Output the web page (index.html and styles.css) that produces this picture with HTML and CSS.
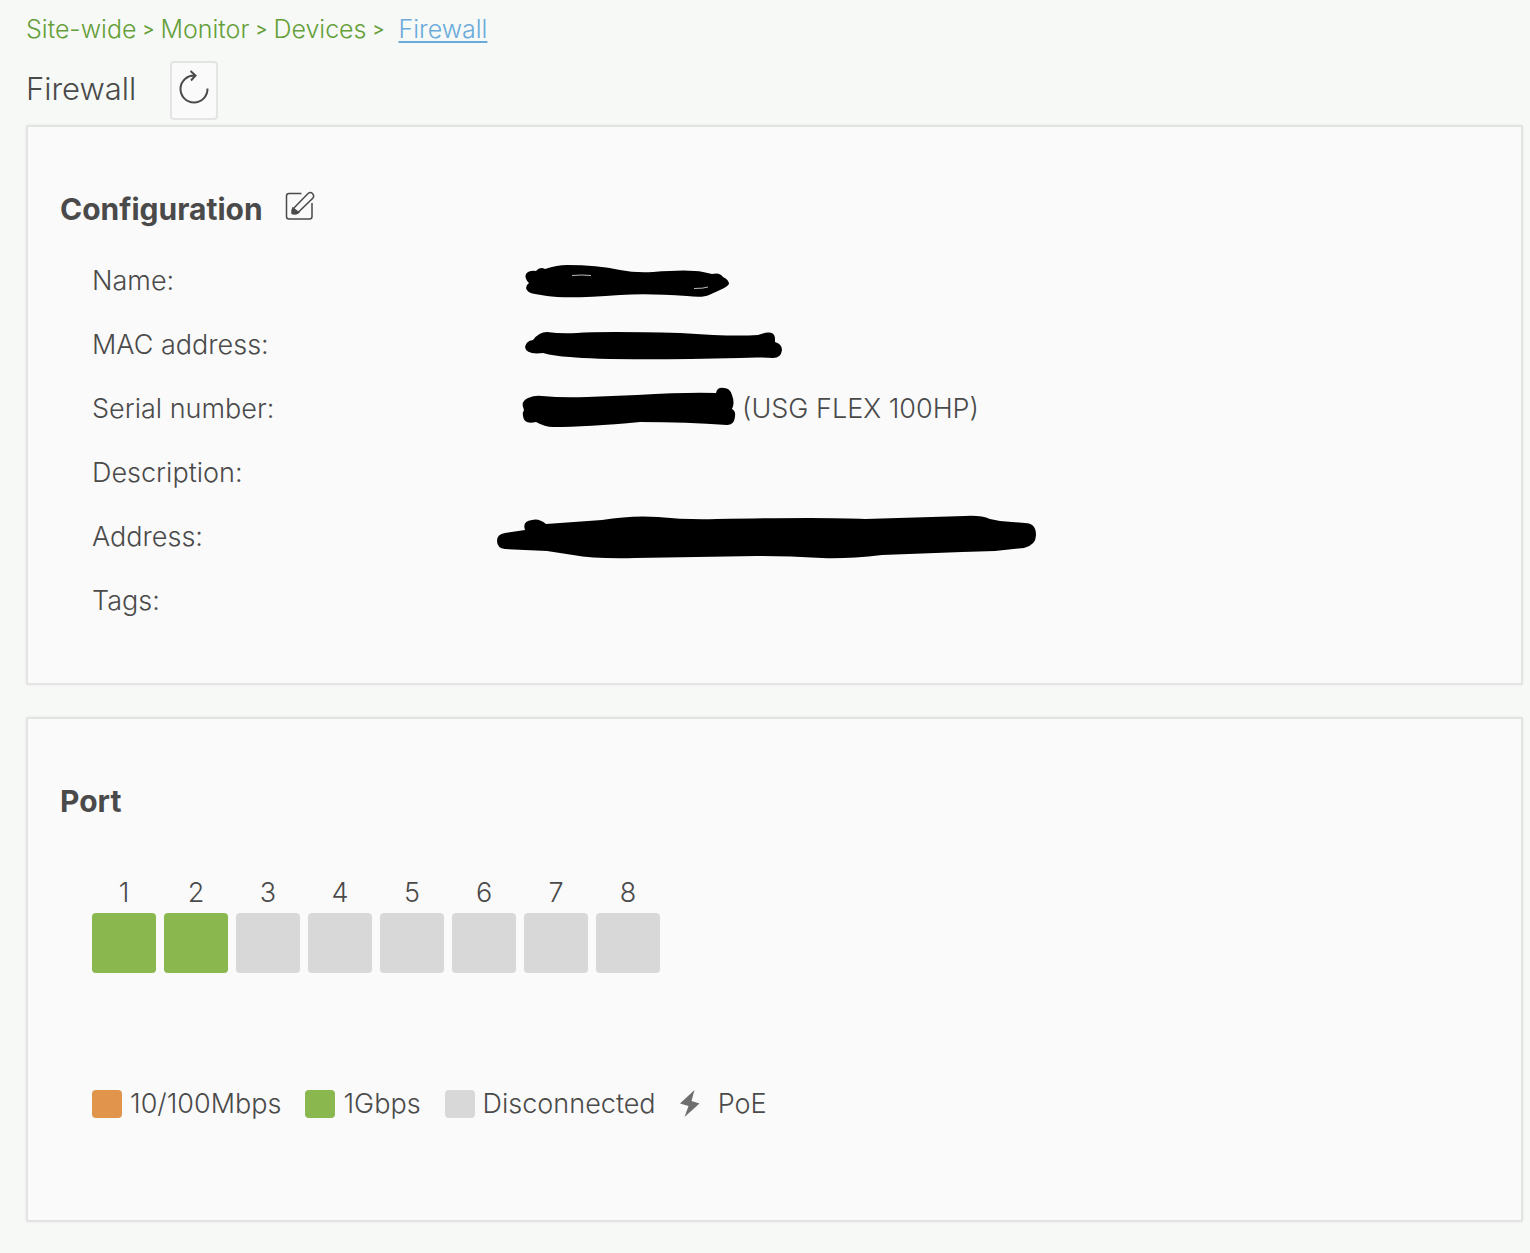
FILE: index.html
```html
<!DOCTYPE html>
<html lang="en">
<head>
<meta charset="utf-8">
<meta name="viewport" content="width=device-width, initial-scale=1">
<title>Firewall</title>
<link rel="stylesheet" href="styles.css">
</head>
<body>
<nav class="breadcrumb" aria-label="Breadcrumb">
  <a href="#">Site-wide</a>
  <span class="separator">&gt;</span>
  <a href="#">Monitor</a>
  <span class="separator">&gt;</span>
  <a href="#">Devices</a>
  <span class="separator">&gt;</span>
  <a class="current" href="#" aria-current="page">Firewall</a>
</nav>
<header class="page-header">
  <h1>Firewall</h1>
  <button class="refresh" type="button" aria-label="Refresh">
    <svg width="32" height="34" viewBox="0 0 32 34" fill="none" stroke="currentColor" stroke-width="2" aria-hidden="true">
      <path d="M29.500 18.500A13.500 13.500 0 1 1 17 5.500M12.500 1L17.500 5.500L13 10.500"/>
    </svg>
  </button>
</header>
<main class="cards">
  <section class="card">
    <div class="card-title">
      <h2>Configuration</h2>
      <button class="edit" type="button" aria-label="Edit configuration">
        <svg width="30" height="30" viewBox="0 0 30 30" fill="none" stroke="currentColor" stroke-width="1.500" aria-hidden="true">
          <path d="M16.500 2.500H4Q1.500 2.500 1.500 5V25.500Q1.500 28 4 28H24.500Q27 28 27 25.500V12"/>
          <path d="M8 18L23 2.500Q25.500 .5 27.500 2.500T28 7L13 21.500L7.500 22.500Z"/>
          <path d="M8 17L13.500 21.500Q9.500 24 7 22Q6.500 19.500 8 17Z" fill="currentColor"/>
        </svg>
      </button>
    </div>
    <dl class="details">
      <div class="detail">
        <dt>Name:</dt>
        <dd><svg width="239" height="64" viewBox="0 0 239 64" aria-hidden="true">
          <path d="M32 34Q27 29 29 25Q32 21 39 22Q43 17 48 20Q60 16 70 16Q100 16 123 21Q138 24 156 23Q192 20 206 23L215 25Q223 23 226 28Q232 31 232 35Q230 38 223 41L212 46Q206 49 190 47Q150 44 123 46Q70 50 50 47L38 45Q30 44 29 39Q29 36 32 34Z"/>
          <path d="M75 26.500Q84 25.500 94 26.500M197 39.500Q207 39.500 211 38" fill="none" stroke="#bdbdbd"/>
        </svg></dd>
      </div>
      <div class="detail">
        <dt>MAC address:</dt>
        <dd><svg width="289" height="64" viewBox="0 0 289 64" aria-hidden="true">
          <path d="M28 34Q29 28 36 27Q42 19 50 19Q64 21 80 20Q105 18 183 20L216 22Q244 23 261 22Q277 16 278 25V29Q285 31 285 37Q284 45 276 45Q260 44 243 45L193 46Q100 47 73 44Q57 43 46 40Q29 42 28 34Z"/>
        </svg></dd>
      </div>
      <div class="detail">
        <dt>Serial number:</dt>
        <dd><svg width="239" height="64" viewBox="0 0 239 64" aria-hidden="true">
          <path d="M27 33Q23 24 31 21Q38 18 45 19Q65 21 90 20L140 18Q190 15 219 16Q220 10 227 11Q233 11 235 18Q238 26 235 32Q239 34 238 40Q237 48 230 48Q190 45 143 45Q90 50 56 50Q48 50 39 45Q27 48 26 39Q25 36 27 33Z"/>
        </svg><span>(USG FLEX 100HP)</span></dd>
      </div>
      <div class="detail">
        <dt>Description:</dt>
        <dd></dd>
      </div>
      <div class="detail">
        <dt>Address:</dt>
        <dd><svg width="540" height="64" viewBox="0 0 540 64" aria-hidden="true">
          <path d="M0 36Q0 29 8 28L28 25Q25 16 35 15Q42 13 49 19L105 15Q135 10 161 12Q190 15 220 14Q330 12 368 14L468 11Q484 10 493 14L503 16L528 18Q539 18 539 30Q539 40 527 43L498 46L465 47L385 50Q350 54 325 53Q290 51 260 51L138 53Q98 54 76 50L50 46L8 44Q0 43 0 36Z"/>
        </svg></dd>
      </div>
      <div class="detail">
        <dt>Tags:</dt>
        <dd></dd>
      </div>
    </dl>
  </section>
  <section class="card">
    <div class="card-title">
      <h2>Port</h2>
    </div>
    <ol class="ports">
      <li class="port"><span>1</span><i class="jack gigabit"></i></li>
      <li class="port"><span>2</span><i class="jack gigabit"></i></li>
      <li class="port"><span>3</span><i class="jack"></i></li>
      <li class="port"><span>4</span><i class="jack"></i></li>
      <li class="port"><span>5</span><i class="jack"></i></li>
      <li class="port"><span>6</span><i class="jack"></i></li>
      <li class="port"><span>7</span><i class="jack"></i></li>
      <li class="port"><span>8</span><i class="jack"></i></li>
    </ol>
    <ul class="legend">
      <li><i class="swatch fast"></i>10/100Mbps</li>
      <li><i class="swatch gigabit"></i>1Gbps</li>
      <li><i class="swatch"></i>Disconnected</li>
      <li>
        <svg width="30" height="28" viewBox="0 0 30 28" fill="#6e6e6e" aria-hidden="true"><path d="M14.500 0L0 13.500L8.500 16L4.500 27L19.500 13.500L11.500 11Z"/></svg>
        PoE
      </li>
    </ul>
  </section>
</main>
</body>
</html>
```
FILE: styles.css
```css
* {
  box-sizing: border-box;
}

body {
  margin: 0;
  padding: 13px 7px 31px 26px;
  background: #f7f9f6;
  color: #4a4a4a;
  font-family: Inter, "Liberation Sans", sans-serif;
  font-size: 27px;
  font-weight: 300;
  line-height: 32px;
}

h1,
h2,
dl,
dd,
ol,
ul {
  margin: 0;
  padding: 0;
}

ol,
ul {
  list-style: none;
}

button {
  display: grid;
  place-items: center;
  padding: 0;
  color: inherit;
  cursor: pointer;
}

svg {
  display: block;
  flex: none;
}

.breadcrumb {
  display: flex;
  flex-wrap: wrap;
  gap: 6px;
  color: #659f3a;
  font-size: 25px;
}

.breadcrumb a {
  color: inherit;
  text-decoration: none;
}

.breadcrumb .separator {
  font-size: 18px;
  font-weight: 500;
}

.breadcrumb .current {
  margin-left: 8px;
  color: #6aabdc;
  text-decoration: underline;
  text-decoration-thickness: 2px;
  text-underline-offset: 3px;
}

.page-header {
  display: flex;
  align-items: center;
  gap: 34px;
  padding: 16px 0 5px;
}

.page-header h1 {
  padding-bottom: 4px;
  font-size: 31px;
  font-weight: 300;
}

.refresh {
  width: 48px;
  height: 59px;
  padding-bottom: 8px;
  border: 2px solid #e3e4e3;
  border-radius: 4px;
  background: #fafafa;
}

.cards {
  display: grid;
  gap: 32px;
}

.card {
  padding: 64px 32px;
  border: 2px solid #e2e3e2;
  border-radius: 2px;
  background: #fafafa;
  box-shadow: 0 0 3px #e8eae8;
}

.card-title {
  display: flex;
  align-items: center;
  gap: 22px;
  height: 36px;
}

.card-title h2 {
  font-size: 30px;
  font-weight: 700;
}

.edit {
  padding-bottom: 6px;
  border: 0;
  background: none;
}

.details {
  padding: 22px 32px 0;
  margin-bottom: -14px;
}

.detail {
  display: grid;
  grid-template-columns: 405px 1fr;
  align-items: center;
  height: 64px;
}

.detail dd {
  display: flex;
  align-items: center;
  gap: 6px;
}

.ports {
  display: flex;
  gap: 8px;
  padding: 58px 32px 0;
}

.port {
  display: grid;
  gap: 4px;
  width: 64px;
  text-align: center;
}

.jack {
  height: 60px;
  border-radius: 4px;
  background: #d8d8d8;
}

.legend {
  display: flex;
  flex-wrap: wrap;
  gap: 24px;
  padding: 115px 32px 36px;
}

.legend li {
  display: flex;
  align-items: center;
  gap: 8px;
}

.swatch {
  width: 30px;
  height: 28px;
  border-radius: 4px;
  background: #d8d8d8;
}

.gigabit {
  background: #8ab84e;
}

.fast {
  background: #e0944c;
}
```
